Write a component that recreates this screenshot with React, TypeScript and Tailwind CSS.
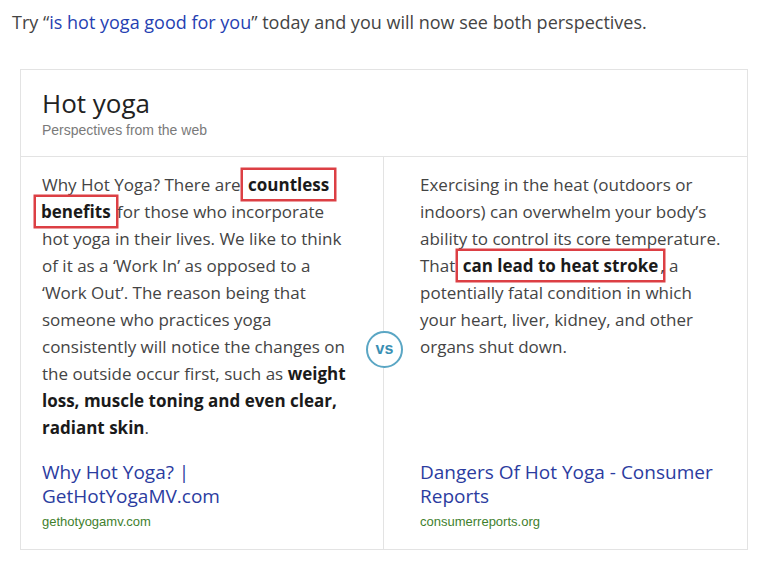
import type { ReactNode } from 'react';

const body = { fontFamily: '"Open Sans", "Noto Sans", sans-serif' };
const arial = { fontFamily: '"Liberation Sans", Arial, sans-serif' };

function Boxed({ children, first }: { children: ReactNode; first?: boolean }) {
  return (
    <span
      className={`font-bold text-[#1a1a1a] ring-[2.5px] ring-[#dc3f44] px-[5px] py-[3px] ${
        first ? '-ml-[6px]' : '-ml-[2px]'
      } -mr-[3px]`}
    >
      {children}
    </span>
  );
}

function Source({ title, url }: { title: ReactNode; url: string }) {
  return (
    <div className="mt-auto">
      <a href="#" className="block text-[19px] leading-[24px] text-[#2b3c9f]" style={body}>
        {title}
      </a>
      <p className="mt-[4px] text-[13px] text-[#3f7f2e]" style={arial}>
        {url}
      </p>
    </div>
  );
}

export default function App() {
  return (
    <div className="w-[768px] h-[568px] bg-white overflow-hidden text-[#444]" style={body}>
      <p className="pl-[12px] pt-[10px] text-[18px] leading-[24px] text-[#444]">
        Try “<span className="text-[#2541b2]">is hot yoga good for you</span>” today and you will now see both perspectives.
      </p>

      <div className="ml-[20px] mt-[35px] w-[728px] h-[481px] border border-[#e3e3e3] flex flex-col">
        {/* header */}
        <div className="h-[87px] border-b border-[#e3e3e3] px-[21px] pt-[17px]">
          <h1 className="text-[26px] leading-[33px] text-[#222]" style={body}>Hot yoga</h1>
          <p className="text-[14px] text-[#7a7a7a]" style={arial}>Perspectives from the web</p>
        </div>

        {/* columns */}
        <div className="relative flex flex-1">
          <div className="w-[363px] border-r border-[#e3e3e3] px-[21px] pt-[14px] pb-[18px] flex flex-col">
            <p className="text-[17px] leading-[27px] text-[#444]">
              Why Hot Yoga? There are <Boxed>countless</Boxed>
              <br />
              <Boxed first>benefits</Boxed> for those who incorporate
              <br />
              hot yoga in their lives. We like to think
              <br />
              of it as a ‘Work In’ as opposed to a
              <br />
              ‘Work Out’. The reason being that
              <br />
              someone who practices yoga
              <br />
              consistently will notice the changes on
              <br />
              the outside occur first, such as <b className="text-[#1a1a1a]">weight</b>
              <br />
              <b className="text-[#1a1a1a]">loss, muscle toning and even clear,</b>
              <br />
              <b className="text-[#1a1a1a]">radiant skin</b>.
            </p>
            <Source title={<>Why Hot Yoga? |<br />GetHotYogaMV.com</>} url="gethotyogamv.com" />
          </div>

          <div className="flex-1 pl-[36px] pr-[10px] pt-[14px] pb-[18px] flex flex-col">
            <p className="text-[17px] leading-[27px] text-[#444]">
              Exercising in the heat (outdoors or
              <br />
              indoors) can overwhelm your body’s
              <br />
              ability to control its core temperature.
              <br />
              That <Boxed>can lead to heat stroke</Boxed>, a
              <br />
              potentially fatal condition in which
              <br />
              your heart, liver, kidney, and other
              <br />
              organs shut down.
            </p>
            <Source title={<>Dangers Of Hot Yoga - Consumer<br />Reports</>} url="consumerreports.org" />
          </div>

          {/* vs badge */}
          <div className="absolute left-[345px] top-[174px] w-[37px] h-[37px] rounded-full border-2 border-[#5aa6c4] bg-white flex items-center justify-center">
            <span className="text-[16px] font-bold text-[#3a8fb3] leading-none -mt-[1px]" style={arial}>vs</span>
          </div>
        </div>
      </div>
    </div>
  );
}
